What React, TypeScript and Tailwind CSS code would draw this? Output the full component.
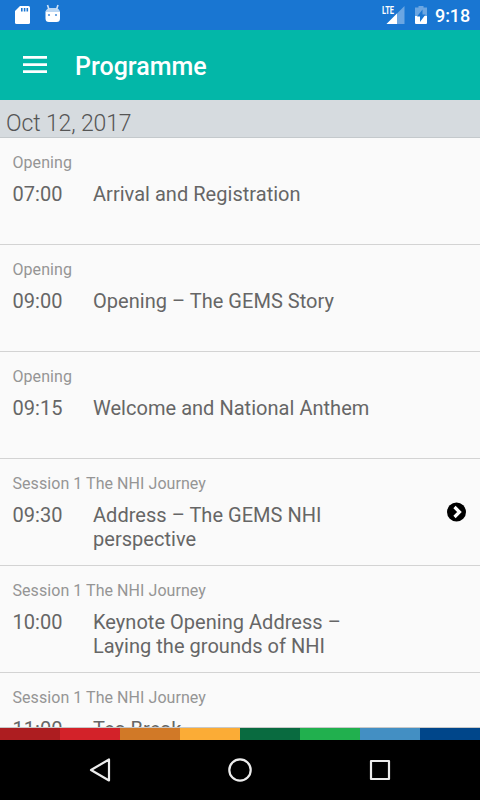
import React from "react";

interface Session {
  track: string;
  time: string;
  title: string;
  hasDetails?: boolean;
}

const sessions: Session[] = [
  { track: "Opening", time: "07:00", title: "Arrival and Registration" },
  { track: "Opening", time: "09:00", title: "Opening – The GEMS Story" },
  { track: "Opening", time: "09:15", title: "Welcome and National Anthem" },
  { track: "Session 1 The NHI Journey", time: "09:30", title: "Address – The GEMS NHI perspective", hasDetails: true },
  { track: "Session 1 The NHI Journey", time: "10:00", title: "Keynote Opening Address – Laying the grounds of NHI" },
  { track: "Session 1 The NHI Journey", time: "11:00", title: "Tea Break" },
];

const stripColors = [
  "bg-[#ad1d20]",
  "bg-[#d32229]",
  "bg-[#d17927]",
  "bg-[#fbac36]",
  "bg-[#096b40]",
  "bg-[#21b04e]",
  "bg-[#438fc3]",
  "bg-[#00468a]",
];

const StatusBar = () => (
  <div className="flex h-[30px] shrink-0 items-center justify-between bg-[#1976d2] text-white">
    <svg className="h-[30px] w-[70px]" viewBox="0 0 70 30">
      <path d="M20 6h8.5a1.5 1.5 0 0 1 1.5 1.5v15a1.5 1.5 0 0 1-1.5 1.5h-12a1.5 1.5 0 0 1-1.5-1.5V11z" fill="#fff" />
      <path d="M21 8h1.6v3.5H21zM23.8 8h1.6v3.5h-1.6zM26.5 8h1.6v3.5h-1.6z" fill="#1976d2" />
      <path d="M45.5 11.5H60v7a3.5 3.5 0 0 1-3.5 3.5H49a3.5 3.5 0 0 1-3.5-3.5z" fill="#fff" />
      <path d="M45.5 12c.4-2.5 2.5-4 4.5-4h5.5c2 0 4.100 1.5 4.5 4z" fill="#bcd7f2" />
      <path d="M47.5 5l1.5 4.5M58 5l-1.5 4.5" stroke="#cfe2f6" strokeWidth="1.6" />
      <circle cx="49" cy="15" r="1.1" fill="#4e93dc" />
      <circle cx="56" cy="15" r="1.1" fill="#4e93dc" />
    </svg>
    <div className="flex items-center">
      <svg className="h-[30px] w-[55px]" viewBox="0 0 55 30">
        <path d="M29.5 6v18h-18z" fill="#6ba6e2" />
        <path d="M22 13.5V24H11.500z" fill="#fff" />
        <rect x="6" y="5" width="14" height="10" fill="#1976d2" />
        <text x="7" y="14" fontFamily="Roboto" fontWeight="700" fontSize="11" textLength="12" lengthAdjust="spacingAndGlyphs" fill="#fff">LTE</text>
        <path d="M43.5 6h5v1.5H52V16H40V7.5h3.500z" fill="#6ba6e2" />
        <path d="M40 16h12v7a1 1 0 0 1-1 1H41a1 1 0 0 1-1-1z" fill="#fff" />
        <path d="M47.5 9.500v5h3L45 22v-5.5h-3z" fill="#1976d2" />
      </svg>
      <span className="w-[50px] pl-[5px] pt-[2px] text-[18px] font-medium leading-none tracking-[-0.1px]">9:18</span>
    </div>
  </div>
);

const SessionRow: React.FC<{ session: Session }> = ({ session }) => (
  <div className="flex h-[107px] shrink-0 items-start border-b border-[#d3d3d3] pl-[12.5px] pr-[14px] pt-[15px]">
    <div className="w-[400px]">
      <p className="text-[16px] leading-5 tracking-[0.06px] text-[#959595]">{session.track}</p>
      <div className="mt-[9px] flex text-[20px] leading-6 tracking-[0.03px] text-[#666]">
        <span className="w-[80.5px] shrink-0">{session.time}</span>
        <span className="w-[290px]">{session.title}</span>
      </div>
    </div>
    {session.hasDetails && (
      <svg className="ml-auto mt-[28px] h-5 w-5" viewBox="0 0 20 20">
        <circle cx="10.500" cy="10" r="9.500" fill="#000" />
        <path d="M8.500 5l5 5-5 5" fill="none" stroke="#fff" strokeWidth="3.200" />
      </svg>
    )}
  </div>
);

const NavigationBar = () => (
  <div className="flex h-[60px] shrink-0 items-center justify-center bg-black">
    <svg className="h-[60px] w-[480px]" viewBox="0 0 480 60" fill="none" stroke="#ececec" strokeWidth="2.2" strokeLinejoin="round">
      <path d="M109 19.500v21L91 30z" />
      <circle cx="240" cy="30" r="10.700" />
      <rect x="371" y="21" width="18" height="18" />
    </svg>
  </div>
);

export default function App() {
  return (
    <div className="flex h-[800px] w-[480px] flex-col overflow-hidden bg-[#fafafa] font-['Roboto',sans-serif]">
      <StatusBar />

      {/* App bar */}
      <header className="flex h-[70px] shrink-0 items-center bg-[#03b7a8] pl-[23px] text-white">
        <svg className="h-[18px] w-6" viewBox="0 0 24 18">
          <path d="M0 0h24v2.700H0zM0 7.200h24v2.700H0zM0 14.200h24v2.700H0z" fill="#fff" />
        </svg>
        <h1 className="ml-7 pt-[3px] text-[25px] font-medium leading-8">Programme</h1>
      </header>

      <div className="h-[38px] shrink-0 border-b border-[#c4c9cc] bg-[#d6dbdf] pl-[6px] pt-[9px] text-[23px] font-light leading-[30px] tracking-[-0.13px] text-[#555]">
        Oct 12, 2017
      </div>

      {/* Session list, the last row runs under the strip */}
      <main className="flex min-h-0 flex-1 flex-col overflow-hidden">
        {sessions.map((session) => (
          <SessionRow key={session.time} session={session} />
        ))}
      </main>

      <div className="flex h-[13px] shrink-0 border-t border-[#c8c8c8]">
        {stripColors.map((color) => (
          <div key={color} className={`flex-1 ${color}`} />
        ))}
      </div>
      <NavigationBar />
    </div>
  );
}
